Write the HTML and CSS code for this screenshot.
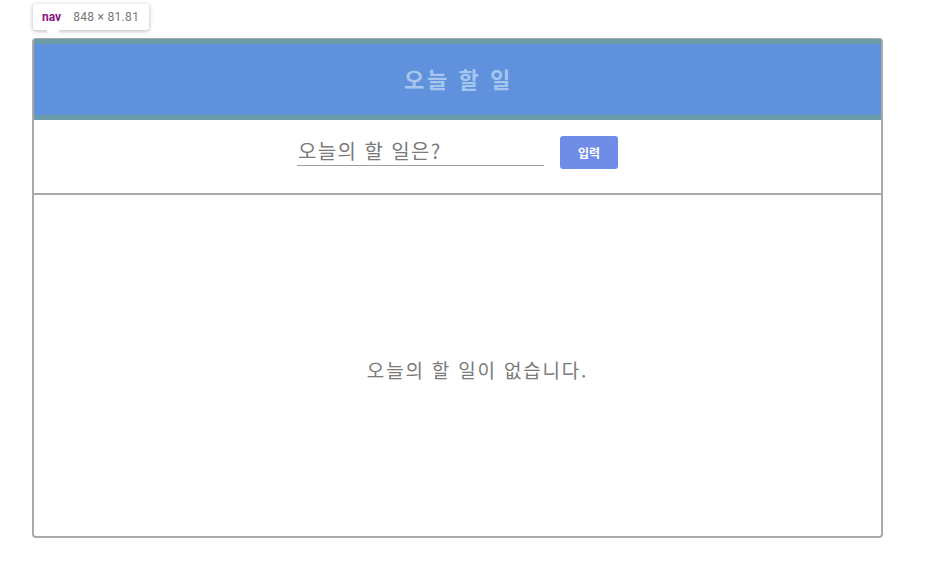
FILE: index.html
```html
<!DOCTYPE html>
<html lang="ko">
<head>
<meta charset="utf-8">
<title>오늘 할 일</title>
<link rel="stylesheet" href="styles.css">
</head>
<body>
<div class="page">
  <div class="app">
    <nav class="nav"><h1 class="title">오늘 할 일</h1></nav>
    <div class="tip"><span class="tip-tag">nav</span><span class="tip-size">848 × 81.81</span></div>
    <form class="entry">
      <input class="field" type="text" placeholder="오늘의 할 일은?">
      <button class="btn" type="button">입력</button>
    </form>
    <ul class="list">
      <li class="empty">오늘의 할 일이 없습니다.</li>
    </ul>
  </div>
</div>
</body>
</html>
```

FILE: styles.css
```css
* { box-sizing: border-box; }
html, body { margin: 0; padding: 0; background: #fff; }
body { font-family: "Noto Sans CJK KR", "Noto Sans", sans-serif; }
.page { padding: 38px 0 0 32px; }
.app {
  position: relative;
  width: 851px;
  height: 500px;
  border: 2px solid #a9a9a9;
  border-top-width: 1px;
  border-radius: 4px;
  display: flex;
  flex-direction: column;
}
.nav {
  height: 81px;
  background: #5f91dd;
  border-top: 5px solid #6b9ba8;
  border-bottom: 5px solid #6b9ba8;
  display: flex;
  align-items: center;
  justify-content: center;
}
.title {
  margin: 0;
  font-size: 22px;
  font-weight: 700;
  letter-spacing: 2.6px;
  color: #a6c6ee;
  padding: 0 0 3px 2px;
}
.tip {
  position: absolute;
  left: -1px;
  top: -35px;
  height: 26px;
  padding: 0 10px 0 9px;
  background: #fff;
  border-radius: 3px;
  box-shadow: 0 1px 4px rgba(0,0,0,0.3);
  display: flex;
  align-items: center;
  gap: 12px;
  font-family: "Roboto", "Liberation Sans", sans-serif;
  font-size: 12px;
}
.tip::after {
  content: "";
  position: absolute;
  left: 13px;
  bottom: -7px;
  border-left: 7px solid transparent;
  border-right: 7px solid transparent;
  border-top: 7px solid #fff;
}
.tip-tag { color: #881280; font-weight: 700; }
.tip-size { color: #777; letter-spacing: 0.3px; }
.entry {
  height: 75px;
  margin: 0;
  border-bottom: 2px solid #a9a9a9;
  display: flex;
  align-items: center;
  justify-content: center;
  gap: 16px;
  padding-bottom: 12px;
}
.field {
  width: 247px;
  height: 30px;
  border: none;
  border-bottom: 1px solid #a0a0a0;
  outline: none;
  padding: 0 1px;
  font-family: "Noto Sans CJK KR", sans-serif;
  font-size: 20px;
  letter-spacing: 1.4px;
  color: #333;
  background: transparent;
}
.field::placeholder { color: #7a7a7a; }
.btn {
  width: 58px;
  height: 33px;
  margin-top: 4px;
  border: none;
  border-radius: 3px;
  background: #6f8de6;
  color: #fff;
  font-family: "Noto Sans CJK KR", sans-serif;
  font-size: 12px;
  font-weight: 700;
}
.list {
  flex: 1;
  margin: 0;
  padding: 8px 0 0 40px;
  list-style: none;
  display: flex;
  align-items: center;
  justify-content: center;
}
.empty {
  font-size: 19px;
  letter-spacing: 1.8px;
  color: #7a7a7a;
}
```
